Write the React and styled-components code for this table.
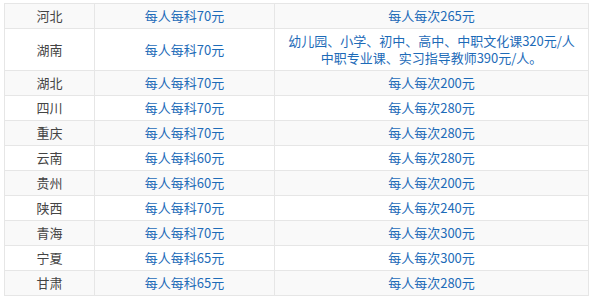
import React from "react";
import styled, { createGlobalStyle } from "styled-components";

const GlobalStyle = createGlobalStyle`
  html, body {
    margin: 0;
    padding: 0;
    background: #fff;
  }
  body {
    font-family: "Noto Sans CJK SC", "Microsoft YaHei", sans-serif;
  }
`;

const Page = styled.div`
  padding: 3px 0 0 4px;
`;

const Table = styled.table`
  width: 585px;
  border-collapse: collapse;
  table-layout: fixed;
  font-size: 13px;
  line-height: 17px;
`;

const Row = styled.tr`
  background: ${(p) => (p.$striped ? "#f9f9f9" : "#fff")};
`;

const Cell = styled.td`
  border: 1px solid #e6e6e6;
  padding: 3px 6px 4px;
  text-align: center;
  vertical-align: middle;
  color: ${(p) => (p.$province ? "#444" : "#1d6bb8")};
  white-space: nowrap;
`;

const rows = [
  ["河北", "每人每科70元", "每人每次265元"],
  [
    "湖南",
    "每人每科70元",
    <>
      幼儿园、小学、初中、高中、中职文化课320元/人
      <br />
      中职专业课、实习指导教师390元/人。
    </>,
  ],
  ["湖北", "每人每科70元", "每人每次200元"],
  ["四川", "每人每科70元", "每人每次280元"],
  ["重庆", "每人每科70元", "每人每次280元"],
  ["云南", "每人每科60元", "每人每次280元"],
  ["贵州", "每人每科60元", "每人每次200元"],
  ["陕西", "每人每科70元", "每人每次240元"],
  ["青海", "每人每科70元", "每人每次300元"],
  ["宁夏", "每人每科65元", "每人每次300元"],
  ["甘肃", "每人每科65元", "每人每次280元"],
];

const App = () => {
  return (
    <>
      <GlobalStyle />
      <Page>
        <Table>
          <colgroup>
            <col style={{ width: 90 }} />
            <col style={{ width: 180 }} />
            <col />
          </colgroup>
          <tbody>
            {rows.map((r, i) => (
              <Row key={i} $striped={i % 2 === 0}>
                <Cell $province>{r[0]}</Cell>
                <Cell>{r[1]}</Cell>
                <Cell>{r[2]}</Cell>
              </Row>
            ))}
          </tbody>
        </Table>
      </Page>
    </>
  );
};

export default App;
